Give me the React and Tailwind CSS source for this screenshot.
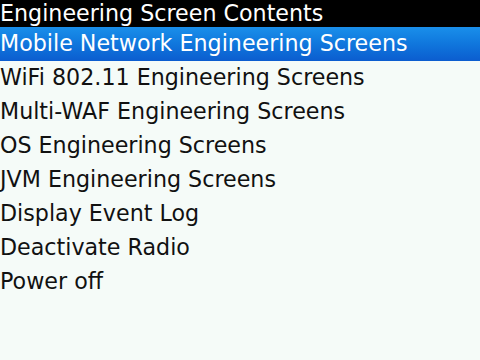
import React from 'react';

const items = [
  'Mobile Network Engineering Screens',
  'WiFi 802.11 Engineering Screens',
  'Multi-WAF Engineering Screens',
  'OS Engineering Screens',
  'JVM Engineering Screens',
  'Display Event Log',
  'Deactivate Radio',
  'Power off',
];

export default function App() {
  return (
    <div className="w-[480px] h-[360px] overflow-hidden bg-[#f5fbf8] font-['DejaVu_Sans',sans-serif] text-[22.2px] leading-none">
      <div className="h-[27px] bg-black text-white flex items-center">
        Engineering Screen Contents
      </div>
      {items.map((label, i) => (
        <div
          key={label}
          className={
            i === 0
              ? 'h-[34px] pb-[2px] flex items-center text-white bg-gradient-to-b from-[#1a8fea] to-[#0c5dcf]'
              : 'h-[34px] pb-[2px] flex items-center text-[#111]'
          }
        >
          {label}
        </div>
      ))}
    </div>
  );
}
